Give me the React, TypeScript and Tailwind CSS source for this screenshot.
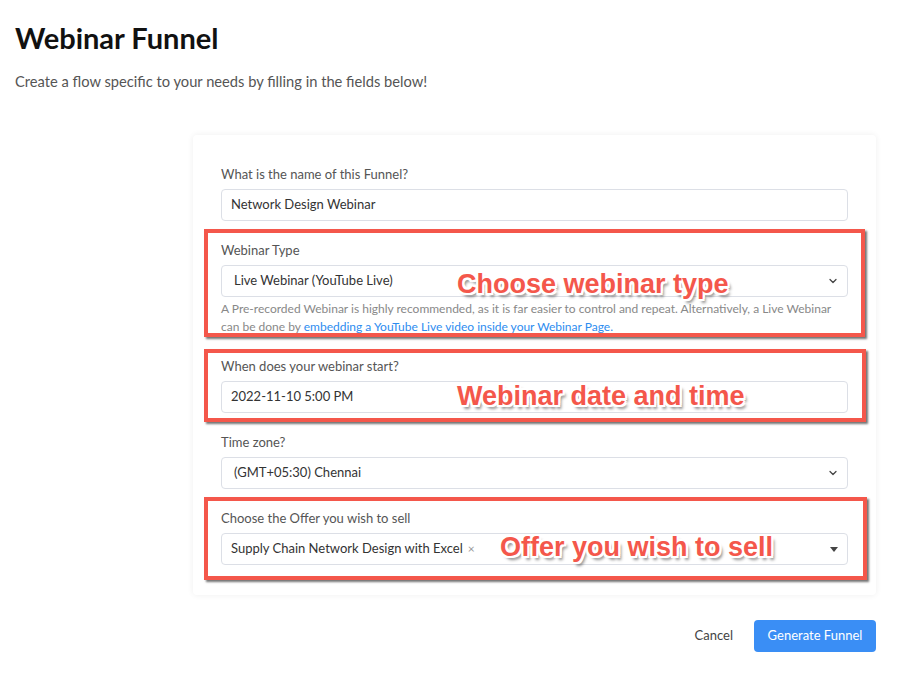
import { ChevronDown } from "lucide-react";

const ui = "font-['Lato','Noto_Sans',sans-serif]";
const ann =
  "absolute font-['Liberation_Sans',Arial,sans-serif] font-bold text-[27px] leading-none text-[#f4574b] [text-shadow:-2px_-2px_0_#fff,2px_-2px_0_#fff,-2px_2px_0_#fff,2px_2px_0_#fff,0_-2px_0_#fff,0_2px_0_#fff,-2px_0_0_#fff,2px_0_0_#fff,3px_4px_3px_rgba(0,0,0,0.45)]";
const box =
  "absolute border-[4px] border-[#f4574b] shadow-[2px_2px_2px_rgba(0,0,0,0.55)] pointer-events-none";

function Label({ children }: { children: React.ReactNode }) {
  return <div className="text-[13px] leading-[18px] text-[#555] mb-[6px]">{children}</div>;
}

function Field({ value, chevron }: { value: React.ReactNode; chevron?: "down" | "caret" }) {
  return (
    <div className="h-[32px] border border-[#dcdfe6] rounded-[4px] bg-white flex items-center justify-between pl-[9px] pr-[8px] text-[13px] text-[#333]">
      <div className="flex items-center">{value}</div>
      {chevron === "down" && <ChevronDown size={12} strokeWidth={2.5} className="text-[#444]" />}
      {chevron === "caret" && (
        <svg width="8" height="5" viewBox="0 0 8 5" className="mr-[1px]">
          <path d="M0 0h8L4 5z" fill="#444" />
        </svg>
      )}
    </div>
  );
}

export default function App() {
  return (
    <div className={`relative w-[900px] h-[675px] bg-white overflow-hidden ${ui}`}>
      <div className="pl-[15px] pt-[18px]">
        <h1 className="text-[29px] leading-[40px] font-bold text-[#111]">Webinar Funnel</h1>
        <p className="mt-[13px] text-[14.7px] leading-[20px] text-[#555]">
          Create a flow specific to your needs by filling in the fields below!
        </p>
      </div>

      <div className="ml-[193px] mt-[44px] w-[683px] bg-white rounded-[4px] shadow-[0_0_6px_rgba(0,0,0,0.07)] px-[28px] pt-[30px] pb-[30px]">
        <Label>What is the name of this Funnel?</Label>
        <Field value="Network Design Webinar" />

        <div className="mt-[20px]">
          <Label>Webinar Type</Label>
          <Field value={<span className="pl-[3px]">Live Webinar (YouTube Live)</span>} chevron="down" />
          <p className="mt-[3px] text-[12px] leading-[18px] text-[#888]">
            A Pre-recorded Webinar is highly recommended, as it is far easier to control and repeat. Alternatively, a Live Webinar can be done by{" "}
            <a className="text-[#2d8cf0]">embedding a YouTube Live video inside your Webinar Page.</a>
          </p>
        </div>

        <div className="mt-[21px]">
          <Label>When does your webinar start?</Label>
          <Field value="2022-11-10 5:00 PM" />
        </div>

        <div className="mt-[20px]">
          <Label>Time zone?</Label>
          <Field value={<span className="pl-[3px]">(GMT+05:30) Chennai</span>} chevron="down" />
        </div>

        <div className="mt-[20px]">
          <Label>Choose the Offer you wish to sell</Label>
          <Field
            value={
              <>
                Supply Chain Network Design with Excel
                <span className="ml-[5px] text-[12px] text-[#999]">×</span>
              </>
            }
            chevron="caret"
          />
        </div>
      </div>

      <div className="flex justify-end items-center gap-[19px] pr-[24px] mt-[25px]">
        <button className="text-[13px] text-[#444] px-[2px]">Cancel</button>
        <button className="h-[32px] w-[122px] rounded-[4px] bg-[#3a8ef5] text-white text-[13px]">Generate Funnel</button>
      </div>

      <div className={box} style={{ left: 204, top: 229, width: 661, height: 108 }} />
      <div className={box} style={{ left: 204, top: 349, width: 662, height: 73 }} />
      <div className={box} style={{ left: 204, top: 497, width: 663, height: 83 }} />

      <div className={ann} style={{ left: 457, top: 271 }}>Choose webinar type</div>
      <div className={ann} style={{ left: 457, top: 383 }}>Webinar date and time</div>
      <div className={ann} style={{ left: 500, top: 534 }}>Offer you wish to sell</div>
    </div>
  );
}
